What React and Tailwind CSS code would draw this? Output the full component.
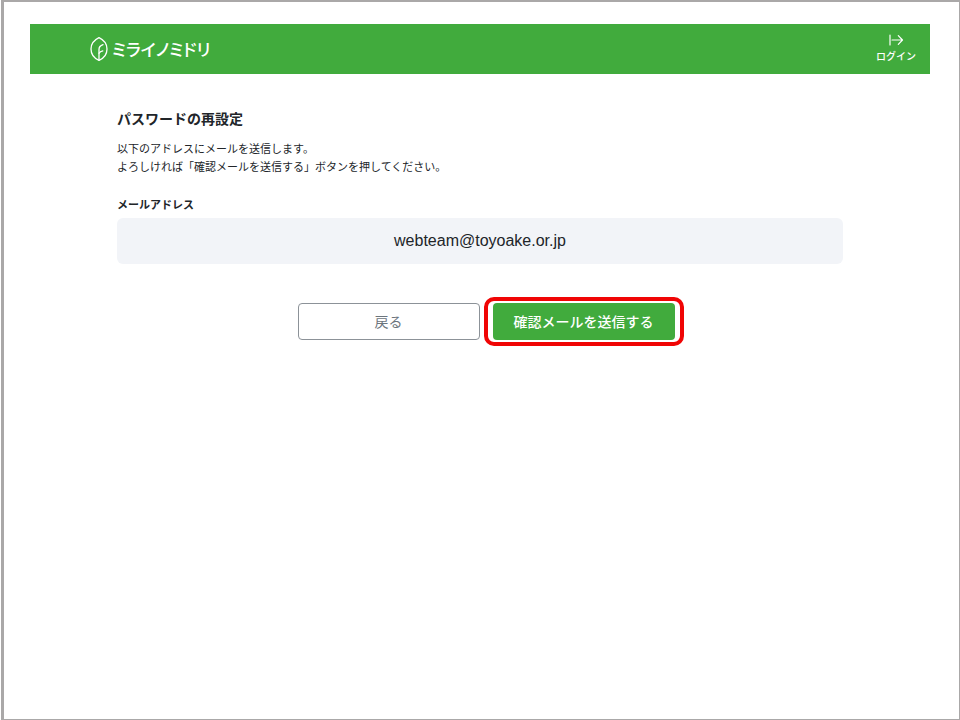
function LeafMark() {
  return (
    <svg
      viewBox="0 0 18 26"
      className="h-[26px] w-[18px]"
      fill="none"
      stroke="currentColor"
      strokeWidth="1.3"
      strokeLinecap="round"
      aria-hidden="true"
    >
      <path d="M9 1.600C4 4 1 8.200 1 13s3 9.200 8 11.400c5-2.200 8-6.600 8-11.400S14 4 9 1.600Z" />
      <path d="M9 24.200V13.400c0-2.200 1.400-3.900 4-4.800" />
      <path d="M9 17.300c.8-1.400 2-2.100 3.800-2.500" />
    </svg>
  );
}

function LoginIcon() {
  return (
    <svg
      viewBox="0 0 15 12"
      className="h-3 w-[15px]"
      fill="none"
      stroke="currentColor"
      strokeWidth="1.2"
      strokeLinecap="round"
      strokeLinejoin="round"
      aria-hidden="true"
    >
      <path d="M1 1v10M3 6H13.500M9.300 1.600 13.500 6l-4.200 4.400" />
    </svg>
  );
}

function Header() {
  return (
    <header className="flex h-[50px] items-center justify-between bg-[#41ab3d] pr-3.5 pl-[60px] text-white">
      <a href="#top" className="flex items-center gap-1">
        <LeafMark />
        <span className="text-[17px] leading-6 font-medium [font-feature-settings:'palt']">
          ミライノミドリ
        </span>
      </a>
      <a href="#login" className="flex flex-col items-center gap-1 pb-0.5">
        <LoginIcon />
        <span className="text-[10px] leading-3 font-medium">ログイン</span>
      </a>
    </header>
  );
}

function App() {
  return (
    <div className="min-h-screen bg-white pl-px font-['Noto_Sans_CJK_JP',sans-serif] text-[#212529]">
      <div className="min-h-screen border-t-2 border-r border-b border-l-[3px] border-[#aaa8a8] px-[26px] pt-[22px] pr-[29px]">
        <Header />
        <main className="px-[87px] pt-8">
          <h1 className="text-[14px] leading-6 font-bold">
            パスワードの再設定
          </h1>
          <p className="mt-[9px] text-[11px] leading-[18px]">
            以下のアドレスにメールを送信します。
            <br />
            よろしければ「確認メールを送信する」ボタンを押してください。
          </p>
          <form onSubmit={(e) => e.preventDefault()}>
            <label
              htmlFor="email"
              className="mt-5 block text-[11px] leading-[18px] font-bold"
            >
              メールアドレス
            </label>
            <input
              id="email"
              type="email"
              readOnly
              value="webteam@toyoake.or.jp"
              className="mt-[5px] block h-[46px] w-full rounded-md bg-[#f2f4f8] text-center font-['Liberation_Sans',sans-serif] text-[16px] outline-none"
            />
            <div className="mt-[33px] flex items-center justify-center gap-1 pl-[21px]">
              <button
                type="button"
                className="h-[37px] w-[182px] rounded-sm border border-[#8c9298] text-[14px] text-[#6c757d]"
              >
                戻る
              </button>
              <div className="rounded-[10px] border-4 border-[#f00505] px-[5px] py-0.5">
                <button
                  type="submit"
                  className="block h-[37px] w-[182px] rounded-sm bg-[#41ab3d] text-[14px] font-medium text-white"
                >
                  確認メールを送信する
                </button>
              </div>
            </div>
          </form>
        </main>
      </div>
    </div>
  );
}

export default App;
